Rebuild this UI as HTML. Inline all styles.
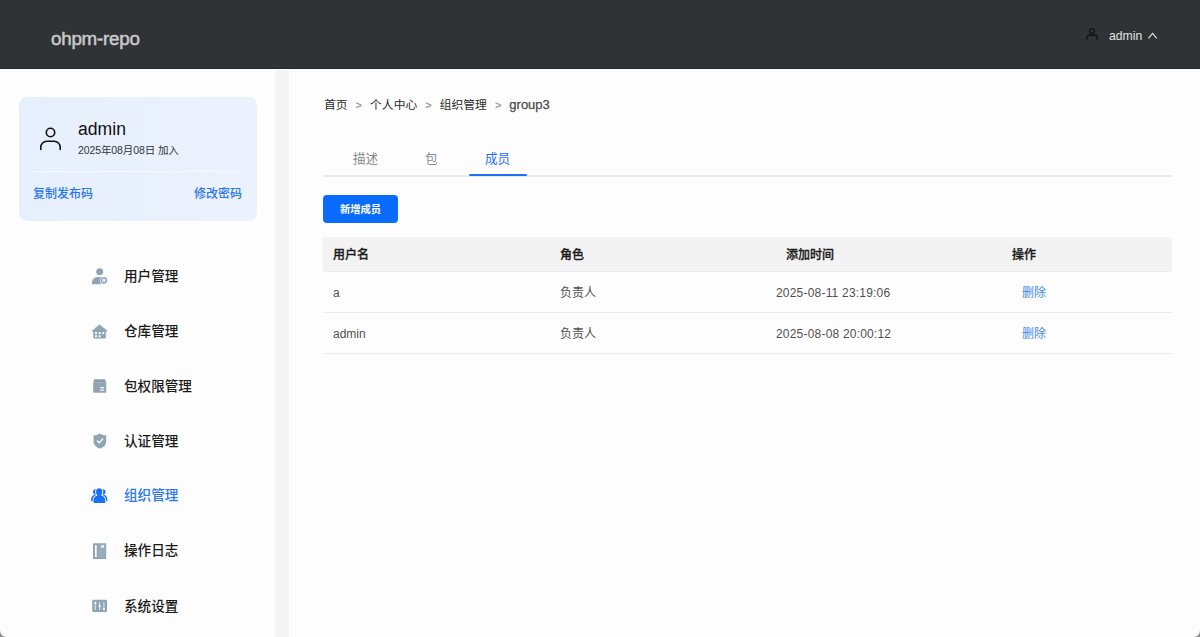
<!DOCTYPE html>
<html lang="zh-CN">
<head>
<meta charset="utf-8">
<title>ohpm-repo</title>
<style>
*{box-sizing:border-box;margin:0;padding:0}
html,body{width:1200px;height:637px;overflow:hidden;background:#fdfdfd}
body{font-family:"Liberation Sans","Noto Sans CJK SC",sans-serif;color:#222;position:relative}
.abs{position:absolute;white-space:nowrap}
#hdr{left:0;top:0;width:1200px;height:68.5px;background:#2f3336;border-bottom:1px solid #24282a}
#logo{left:51px;top:26.7px;font-size:18.8px;line-height:24px;color:#c9c9c9;-webkit-text-stroke:.5px #c9c9c9;letter-spacing:-0.25px}
#huser{left:1109px;top:27.5px;font-size:12.2px;line-height:16px;color:#e4e4e4}
#side{left:275px;top:70px;width:14px;height:567px;background:#f5f5f6}
#main{left:0;top:68.5px;width:1200px;height:1.5px;background:#fff}
#card{left:19px;top:97px;width:237.5px;height:124px;background:linear-gradient(90deg,#e6effd,#ecf2fd);border-radius:8px}
#cname{left:78px;top:118px;font-size:17.6px;line-height:22px;color:#111}
#cdate{left:78px;top:143px;font-size:10.5px;line-height:14px;color:#333;letter-spacing:-0.1px}
#cdiv{left:33px;top:171px;width:209px;height:1px;background:#f6f9fe}
.clink{top:186px;font-size:12px;line-height:16px;color:#2a74ee;font-weight:500}
.mi{left:124px;font-size:13.6px;line-height:20px;color:#1a1a1a;font-weight:500}
.mi.on{color:#2a78f2}
.ic{left:91px;width:17px;height:17px}
#bc{left:324px;top:97px;font-size:11.8px;line-height:16px;color:#2a2a2a}
#bc span{color:#9a9ea8;margin:0 8px;font-weight:bold;font-size:11px}
#bc b{font-weight:normal;font-size:13px;color:#4a4a4a;-webkit-text-stroke:.25px #4a4a4a}
.tab{top:151px;font-size:12.6px;line-height:16px;color:#85888d}
#tline{left:323px;top:175px;width:849px;height:1.6px;background:#e8eaf0}
#tact{left:469px;top:173.700px;width:58px;height:2.600px;background:#1f6df2;border-radius:1px}
#btn{left:323px;top:195px;width:75px;height:28px;background:#0a6cff;border-radius:4px;color:#fff;font-size:10.3px;line-height:29.6px;text-align:center;font-weight:bold}
#th{left:323px;top:237px;width:849px;height:34.500px;background:#f3f3f3;border-bottom:1px solid #ebedf2}
.hc{top:247px;font-size:12px;line-height:16px;font-weight:500;-webkit-text-stroke:.3px #1a1a1a;color:#1a1a1a}
.rl{left:323px;width:849px;height:1px;background:#e9ebf1}
.td{font-size:12px;line-height:16px;color:#505050}
.dt{letter-spacing:.2px}
.del{color:#3f88ef}
</style>
</head>
<body>
<div id="hdr" class="abs"></div>
<div id="logo" class="abs">ohpm-repo</div>
<svg class="abs" style="left:1085px;top:27px" width="14" height="14" viewBox="0 0 14 14" fill="none" stroke="#111" stroke-width="1.3" stroke-linecap="round"><circle cx="7" cy="4" r="2.4"/><path d="M1.7 12.6v-1.2a3.4 3.4 0 0 1 3.4-3.4h3.8a3.4 3.4 0 0 1 3.4 3.4v1.2"/></svg>
<div id="huser" class="abs">admin</div>
<svg class="abs" style="left:1146px;top:30px" width="13" height="10" viewBox="0 0 13 10" fill="none" stroke="#e4e4e4" stroke-width="1.1"><path d="M2.4 8.300 6.600 3.400 10.800 8.300"/></svg>

<div id="side" class="abs"></div>
<div id="main" class="abs"></div>

<div id="card" class="abs"></div>
<svg class="abs" style="left:38px;top:125px" width="25" height="27" viewBox="0 0 25 27" fill="none" stroke="#111" stroke-width="1.6" stroke-linecap="round"><circle cx="12.5" cy="7.5" r="4.2"/><path d="M2.8 24.5v-2.3a6 6 0 0 1 6-6h7.4a6 6 0 0 1 6 6v2.3"/></svg>
<div id="cname" class="abs">admin</div>
<div id="cdate" class="abs">2025年08月08日 加入</div>
<div id="cdiv" class="abs"></div>
<div class="abs clink" style="left:33px">复制发布码</div>
<div class="abs clink" style="right:958px">修改密码</div>

<div class="abs mi" style="top:267px">用户管理</div>
<div class="abs mi" style="top:322px">仓库管理</div>
<div class="abs mi" style="top:377px">包权限管理</div>
<div class="abs mi" style="top:432px">认证管理</div>
<div class="abs mi on" style="top:486px">组织管理</div>
<div class="abs mi" style="top:541px">操作日志</div>
<div class="abs mi" style="top:596.5px">系统设置</div>


<!-- menu icons -->
<svg class="abs" style="left:84px;top:260px" width="40" height="30" viewBox="84 260 40 30"><circle cx="99.7" cy="271.8" r="3.5" fill="#8fa4b4"/><path d="M92 284.2v-1.6c0-3.2 2.6-5.6 5.8-5.6h3.4v7.2z" fill="#8fa4b4"/><circle cx="103.8" cy="280.4" r="4" fill="#fdfdfd"/><circle cx="103.8" cy="280.4" r="2.450" fill="none" stroke="#9aadbb" stroke-width="1.700"/><circle cx="103.8" cy="280.4" r="3.250" fill="none" stroke="#9aadbb" stroke-width=".7" stroke-dasharray="1.2 1.35"/><path d="M103.300 279.600l1.400.8-1.400.8z" fill="#a9b9c5"/></svg>
<svg class="abs" style="left:84px;top:316px" width="40" height="30" viewBox="84 316 40 30"><path d="M99.6 324.7l7.4 6v.6h-1.300v6.300a.7.7 0 0 1-.7.7h-10.800a.7.7 0 0 1-.7-.7v-6.300h-1.300v-.6z" fill="#8fa4b4" stroke="#8fa4b4" stroke-width=".5" stroke-linejoin="round"/><g fill="#fdfdfd"><rect x="95" y="332.1" width="2" height="2"/><rect x="98.6" y="332.1" width="2" height="2"/><rect x="102.2" y="332.1" width="2" height="2"/><rect x="95" y="335.2" width="2" height="2"/><rect x="98.6" y="335.2" width="2" height="2"/></g></svg>
<svg class="abs" style="left:84px;top:371px" width="40" height="30" viewBox="84 371 40 30"><path d="M94.4 379.3h10.6l1.2 3v9.7a.7.7 0 0 1-.7.7h-11.6a.7.7 0 0 1-.7-.7v-9.7z" fill="#8fa4b4"/><path d="M93.2 382.6h13" stroke="#a9bac6" stroke-width=".7"/><path d="M99.7 379.3v3.3" stroke="#b5c3ce" stroke-width="1"/><path d="M94.3 381.9l.7-1.9h9.4l.7 1.9z" fill="#8298a9" opacity=".55"/><rect x="100.3" y="387.1" width="3.9" height="1.2" fill="#fdfdfd"/><rect x="99.8" y="389.2" width="4.4" height="1.9" fill="#cfd9e1"/></svg>
<svg class="abs" style="left:84px;top:426px" width="40" height="30" viewBox="84 426 40 30"><path d="M99.9 433.500c1.800 1.200 4 1.900 6.300 2.100v5.600c0 3.900-3.100 6.200-6.300 7.400-3.200-1.200-6.300-3.500-6.300-7.400v-5.600c2.300-.2 4.500-.9 6.300-2.100z" fill="#8fa4b4"/><path d="M97.400 441l2 1.700 3.400-3.800" fill="none" stroke="#fdfdfd" stroke-width="1.300" stroke-linecap="round" stroke-linejoin="round"/></svg>
<svg class="abs" style="left:84px;top:480px" width="40" height="30" viewBox="84 480 40 30"><g fill="#1a6ff5"><ellipse cx="95.500" cy="491.800" rx="2.500" ry="2.600"/><ellipse cx="103" cy="491.800" rx="2.500" ry="2.600"/><path d="M91.100 501.200v-1.500c0-2.900 2-5.200 4.600-5.200h3v6.700z"/><path d="M107.400 501.200v-1.500c0-2.900-2-5.200-4.600-5.200h-3v6.700z"/></g><g fill="#1a6ff5" stroke="#fdfdfd" stroke-width="2.200" paint-order="stroke"><ellipse cx="99.200" cy="492" rx="3" ry="3.400"/><path d="M93.700 502.300v-1.500c0-3.100 2.200-5.300 4.600-5.300h1.800c2.700 0 5.100 2.200 5.100 5.300v1.500c0 .4-.3.700-.7.700h-10.100c-.4 0-.7-.3-.7-.7z"/></g><g fill="#1a6ff5"><ellipse cx="99.200" cy="492" rx="3" ry="3.400"/><path d="M93.700 502.300v-1.500c0-3.100 2.200-5.300 4.600-5.300h1.800c2.700 0 5.100 2.200 5.100 5.300v1.500c0 .4-.3.700-.7.700h-10.100c-.4 0-.7-.3-.7-.7z"/><rect x="97.600" y="494.500" width="3.200" height="2"/></g></svg>
<svg class="abs" style="left:84px;top:536px" width="40" height="30" viewBox="84 536 40 30"><rect x="93" y="543.300" width="13.200" height="15.600" rx=".6" fill="#8fa4b4"/><rect x="97.700" y="544.600" width="7.700" height="13" fill="#98acbb"/><rect x="95" y="545.200" width="1.700" height="11.800" fill="#fdfdfd"/><path d="M101.200 545.200h2.800v3l-1.400-1.100-1.400 1.100z" fill="#fdfdfd"/></svg>
<svg class="abs" style="left:84px;top:591px" width="40" height="30" viewBox="84 591 40 30"><rect x="92.200" y="599.800" width="14.800" height="12.200" rx="1.200" fill="#8fa4b4"/><g stroke="#d5dee5" stroke-width="1.200"><path d="M95.300 602v8M99.600 602v8M103.900 602v8"/></g><g fill="#fdfdfd"><circle cx="95.300" cy="602.900" r="1.100"/><circle cx="99.600" cy="606.200" r="1.100"/><circle cx="103.900" cy="609.200" r="1.100"/></g></svg>

<div id="bc" class="abs">首页<span>&gt;</span>个人中心<span>&gt;</span>组织管理<span>&gt;</span><b>group3</b></div>
<div class="abs tab" style="left:353px">描述</div>
<div class="abs tab" style="left:425px">包</div>
<div class="abs tab" style="left:485px;color:#1f6df2">成员</div>
<div id="tline" class="abs"></div>
<div id="tact" class="abs"></div>
<div id="btn" class="abs">新增成员</div>

<div id="th" class="abs"></div>
<div class="abs hc" style="left:333px">用户名</div>
<div class="abs hc" style="left:560px">角色</div>
<div class="abs hc" style="left:786px">添加时间</div>
<div class="abs hc" style="left:1012px">操作</div>
<div class="abs rl" style="top:312px"></div>
<div class="abs rl" style="top:353px"></div>
<div class="abs td" style="left:333px;top:284.7px">a</div>
<div class="abs td" style="left:560px;top:284.7px">负责人</div>
<div class="abs td dt" style="left:776px;top:284.7px">2025-08-11 23:19:06</div>
<div class="abs td del" style="left:1022px;top:284.7px">删除</div>
<div class="abs td" style="left:333px;top:325.7px">admin</div>
<div class="abs td" style="left:560px;top:325.7px">负责人</div>
<div class="abs td dt" style="left:776px;top:325.7px">2025-08-08 20:00:12</div>
<div class="abs td del" style="left:1022px;top:325.7px">删除</div>
<div class="abs" style="left:0;top:631px;width:6px;height:6px;background:radial-gradient(circle at 100% 0,rgba(140,140,140,0) 5.2px,#8c8c8c 6.4px)"></div>
<div class="abs" style="left:1194px;top:631px;width:6px;height:6px;background:radial-gradient(circle at 0 0,rgba(140,140,140,0) 5.2px,#8c8c8c 6.4px)"></div>
</body>
</html>
